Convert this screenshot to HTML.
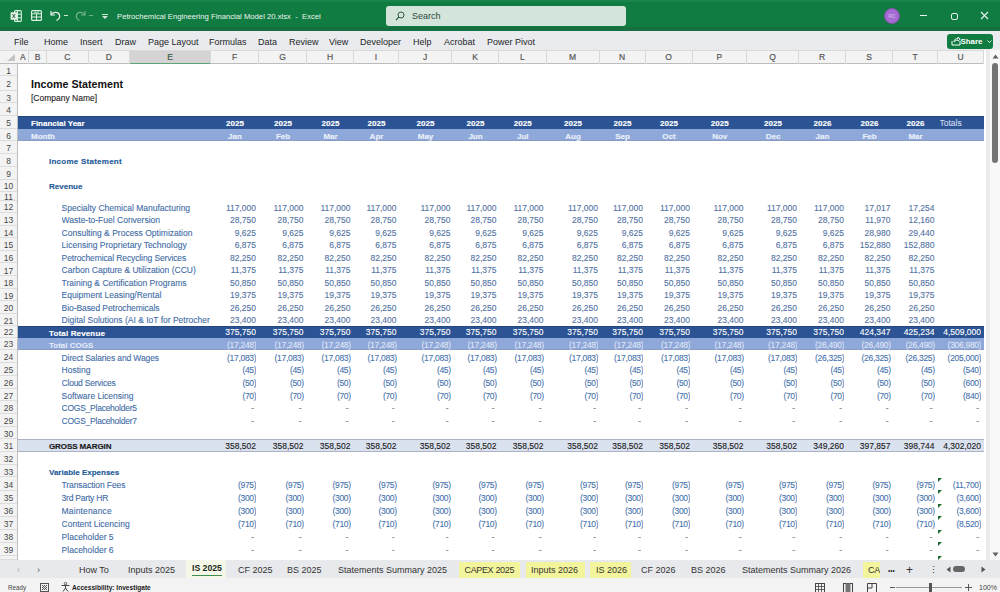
<!DOCTYPE html>
<html><head><meta charset="utf-8">
<style>
*{margin:0;padding:0;box-sizing:border-box;}
html,body{width:1000px;height:592px;overflow:hidden;background:#fff;font-family:"Liberation Sans",sans-serif;}
div{position:absolute;white-space:nowrap;}
#titlebar{left:0;top:0;width:1000px;height:31px;background:#107c41;}
#ribbon{left:0;top:31px;width:1000px;height:19px;background:#e9ebef;}
.menu{top:0;height:19px;line-height:22px;font-size:9px;color:#262626;}
#colhdr{left:0;top:50px;width:984px;height:13.5px;background:#f3f3f3;border-top:1px solid #dadada;border-bottom:1px solid #bdbdbd;}
.ch{top:0;height:12.5px;line-height:13.5px;text-align:center;font-size:8.5px;color:#555;-webkit-text-stroke:0.2px;border-right:1px solid #d8d8d8;}
.ch.sel{background:#d5d3d3;border-bottom:1.5px solid #5fa57a;color:#3d5a48;}
#rowhdr{left:0;top:63.5px;width:17.5px;height:496px;background:#f3f3f3;border-right:1px solid #bdbdbd;}
.rhd{left:0;width:17px;text-align:center;font-size:8.5px;color:#484848;border-bottom:1px solid #dcdcdc;overflow:hidden;}
#sheet{left:0;top:0;width:1000px;height:592px;}
.reg{font-size:8.5px;line-height:12px;overflow:hidden;-webkit-text-stroke:0.1px;}
.bold{font-size:8px;font-weight:bold;line-height:12px;-webkit-text-stroke:0.15px;}
.title{font-size:10.7px;font-weight:bold;color:#111;line-height:12px;}
.blk{color:#1a1a1a;}
.wht{color:#ffffff;}
.wht2{color:rgba(255,255,255,0.72);}
.wht3{color:#eaf0fa;}
.tot{color:#d3def2;}
.blu{color:#1f5c99;}
.itm{color:#416ca6;}
.num{color:#5272a3;}
.num.neg{color:#4673ae;}
.neg{letter-spacing:-0.3px;}
.dash{color:#8a8a8a;}
.tri{width:0;height:0;border-top:4px solid #1e6b30;border-right:4px solid transparent;}
#vscroll{left:984px;top:50px;width:16px;height:509.5px;background:linear-gradient(to right,#ffffff 0,#ffffff 2.5px,#ebebeb 2.5px,#ebebeb 6px,#f8f8f8 6px);}
#tabbar{left:0;top:559.5px;width:1000px;height:18.5px;background:#e8e9ec;}
.tab{top:0;height:18.5px;line-height:21px;font-size:9px;color:#333;}
.ytab{background:#f3f59c;top:2.5px;height:16px;line-height:17px;}
#status{left:0;top:578px;width:1000px;height:14px;background:#f3f3f3;}
.st{top:3px;height:14px;line-height:14px;font-size:6.5px;color:#444;}
</style></head><body>
<div id="titlebar">
  <div style="left:0;top:0;width:1000px;height:2px;background:#1a844f;"></div>
  <div style="left:0;top:27px;width:1000px;height:4px;background:#156f40;"></div>
  <div style="left:0;top:30.5px;width:1000px;height:1px;background:#9fd4b4;"></div>
  <!-- excel icon -->
  <svg style="position:absolute;left:10px;top:10px" width="12" height="12" viewBox="0 0 12 12">
    <rect x="4.5" y="0.6" width="6.8" height="10.8" rx="1" fill="none" stroke="#dff0e6" stroke-width="1.1"/>
    <path d="M7.5 0.6 V11.4 M4.5 4.2 H11.3 M4.5 7.8 H11.3" stroke="#dff0e6" stroke-width="1"/>
    <rect x="0.6" y="2.2" width="6.6" height="7.6" rx="0.6" fill="#e3f2e9"/>
    <path d="M2.4 4 L5.2 8 M5.2 4 L2.4 8" stroke="#2e6b48" stroke-width="1"/>
  </svg>
  <!-- save icon -->
  <svg style="position:absolute;left:31px;top:10px" width="11" height="11" viewBox="0 0 11 11">
    <rect x="0.6" y="0.6" width="9.8" height="9.8" rx="1" fill="none" stroke="#dff0e6" stroke-width="1.2"/>
    <path d="M0.6 3.8 H10.4 M0.6 7 H10.4 M5.5 3.8 V10.4" stroke="#dff0e6" stroke-width="1"/>
    <rect x="3" y="1.4" width="5" height="1.6" fill="#7fbf98"/>
  </svg>
  <!-- undo -->
  <svg style="position:absolute;left:49px;top:9px" width="14" height="13" viewBox="0 0 14 13">
    <path d="M2 2 L2 6 L6 6" fill="none" stroke="#e9f5ee" stroke-width="1.2"/>
    <path d="M2.3 5.8 C4 2.5 9.5 2.5 10.5 6 C11.2 8.5 9.5 10.5 7.5 11.5" fill="none" stroke="#e9f5ee" stroke-width="1.2"/>
  </svg>
  <div style="left:64px;top:15px;width:4px;height:1px;background:#cfe6d8;"></div>
  <!-- redo dim -->
  <svg style="position:absolute;left:74px;top:9px" width="14" height="13" viewBox="0 0 14 13" opacity="0.45">
    <path d="M11 2 L11 6 L7 6" fill="none" stroke="#e9f5ee" stroke-width="1.2"/>
    <path d="M10.7 5.8 C9 2.5 3.5 2.5 2.5 6 C1.8 8.5 3.5 10.5 5.5 11.5" fill="none" stroke="#e9f5ee" stroke-width="1.2"/>
  </svg>
  <div style="left:89px;top:15px;width:4px;height:1px;background:#6fae89;"></div>
  <div style="left:101.5px;top:13.5px;width:6px;height:1px;background:#cfe6d8;"></div>
  <svg style="position:absolute;left:101.5px;top:15.5px" width="6" height="3" viewBox="0 0 6 3"><path d="M0 0 H6 L3 3Z" fill="#cfe6d8"/></svg>
  <div style="left:117px;top:0;height:31px;line-height:34px;font-size:7.7px;color:#eaf4ee;">Petrochemical Engineering Financial Model 20.xlsx &nbsp;-&nbsp; Excel</div>
  <!-- search -->
  <div style="left:386px;top:6px;width:240px;height:20px;background:#d3e4da;border-radius:3px;"></div>
  <svg style="position:absolute;left:395px;top:11px" width="10" height="10" viewBox="0 0 10 10">
    <circle cx="6" cy="4" r="3" fill="none" stroke="#2f5b42" stroke-width="1"/>
    <line x1="3.8" y1="6.2" x2="1" y2="9" stroke="#2f5b42" stroke-width="1.1"/>
  </svg>
  <div style="left:412px;top:6px;height:20px;line-height:20px;font-size:9px;color:#2e4a3a;">Search</div>
  <!-- avatar -->
  <div style="left:884px;top:8px;width:16px;height:16px;border-radius:50%;background:#a56ad2;border:1.5px solid #7e52a8;"></div>
  <div style="left:884px;top:8px;width:16px;height:16px;line-height:16px;text-align:center;font-size:5px;color:#d9c2f0;">RC</div>
  <div style="left:920px;top:15px;width:7px;height:1px;background:#e9f5ee;"></div>
  <div style="left:951px;top:12.5px;width:7px;height:7px;border:1.2px solid #e9f5ee;border-radius:2px;"></div>
  <svg style="position:absolute;left:980px;top:11px" width="9" height="9" viewBox="0 0 9 9">
    <path d="M1 1 L8 8 M8 1 L1 8" stroke="#e9f5ee" stroke-width="1.1"/>
  </svg>
</div>
<div id="ribbon">
  <div class="menu" style="left:14px">File</div>
  <div class="menu" style="left:44px">Home</div>
  <div class="menu" style="left:80px">Insert</div>
  <div class="menu" style="left:115px">Draw</div>
  <div class="menu" style="left:148px">Page Layout</div>
  <div class="menu" style="left:209px">Formulas</div>
  <div class="menu" style="left:258px">Data</div>
  <div class="menu" style="left:289px">Review</div>
  <div class="menu" style="left:329px">View</div>
  <div class="menu" style="left:360px">Developer</div>
  <div class="menu" style="left:413px">Help</div>
  <div class="menu" style="left:444px">Acrobat</div>
  <div class="menu" style="left:487px">Power Pivot</div>
  <div style="left:947px;top:2.5px;width:46px;height:15px;background:#107c41;border-radius:3px;"></div>
  <svg style="position:absolute;left:951px;top:5px" width="10" height="10" viewBox="0 0 10 10">
    <path d="M1 5 L1 9 L9 9 L9 5" fill="none" stroke="#fff" stroke-width="1"/>
    <path d="M3 6 C3 3 5 2.5 7 2.5 L7 1 L9.2 3 L7 5 L7 4 C5.5 4 4.2 4.5 3 6" fill="none" stroke="#fff" stroke-width="0.9"/>
  </svg>
  <div style="left:960.5px;top:2.5px;height:15px;line-height:15px;font-size:7.9px;font-weight:bold;color:#fff;">Share</div>
  <svg style="position:absolute;left:986.5px;top:9px" width="5" height="3" viewBox="0 0 5 3"><path d="M0.5 0.5 L2.5 2.5 L4.5 0.5" fill="none" stroke="#fff" stroke-width="0.9"/></svg>
</div>
<div id="colhdr">
<div class="ch" style="left:17.5px;width:11.5px;">A</div>
<div class="ch" style="left:29px;width:18px;">B</div>
<div class="ch" style="left:47px;width:41.5px;">C</div>
<div class="ch" style="left:88.5px;width:41.5px;">D</div>
<div class="ch sel" style="left:130px;width:81px;">E</div>
<div class="ch" style="left:211px;width:48px;">F</div>
<div class="ch" style="left:259px;width:48px;">G</div>
<div class="ch" style="left:307px;width:47px;">H</div>
<div class="ch" style="left:354px;width:45px;">I</div>
<div class="ch" style="left:399px;width:53px;">J</div>
<div class="ch" style="left:452px;width:47px;">K</div>
<div class="ch" style="left:499px;width:47.5px;">L</div>
<div class="ch" style="left:546.5px;width:53.0px;">M</div>
<div class="ch" style="left:599.5px;width:46.0px;">N</div>
<div class="ch" style="left:645.5px;width:47.0px;">O</div>
<div class="ch" style="left:692.5px;width:54.5px;">P</div>
<div class="ch" style="left:747px;width:52px;">Q</div>
<div class="ch" style="left:799px;width:47px;">R</div>
<div class="ch" style="left:846px;width:47px;">S</div>
<div class="ch" style="left:893px;width:45px;">T</div>
<div class="ch" style="left:938px;width:46px;">U</div>
</div>
<svg style="position:absolute;left:5px;top:53px" width="11" height="9" viewBox="0 0 11 9"><path d="M10 1 L10 8 L2 8 Z" fill="#c4c4c4"/></svg>
<div id="rowhdr"></div>
<div class="rhd" style="top:63.5px;height:12.5px;line-height:14.0px;">1</div>
<div class="rhd" style="top:76px;height:14.5px;line-height:16.0px;">2</div>
<div class="rhd" style="top:90.5px;height:12.700000000000003px;line-height:14.200000000000003px;">3</div>
<div class="rhd" style="top:103.2px;height:13.0px;line-height:14.5px;">4</div>
<div class="rhd" style="top:116.2px;height:12.600000000000009px;line-height:14.100000000000009px;">5</div>
<div class="rhd" style="top:128.8px;height:12.599999999999994px;line-height:14.099999999999994px;">6</div>
<div class="rhd" style="top:141.4px;height:12.900000000000006px;line-height:14.400000000000006px;">7</div>
<div class="rhd" style="top:154.3px;height:12.799999999999983px;line-height:14.299999999999983px;">8</div>
<div class="rhd" style="top:167.1px;height:12.5px;line-height:14.0px;">9</div>
<div class="rhd" style="top:179.6px;height:12.400000000000006px;line-height:13.900000000000006px;">10</div>
<div class="rhd" style="top:192px;height:9px;line-height:10.5px;">11</div>
<div class="rhd" style="top:201px;height:12.400000000000006px;line-height:13.900000000000006px;">12</div>
<div class="rhd" style="top:213.4px;height:12.5px;line-height:14.0px;">13</div>
<div class="rhd" style="top:225.9px;height:12.5px;line-height:14.0px;">14</div>
<div class="rhd" style="top:238.4px;height:12.5px;line-height:14.0px;">15</div>
<div class="rhd" style="top:250.9px;height:12.599999999999994px;line-height:14.099999999999994px;">16</div>
<div class="rhd" style="top:263.5px;height:12.5px;line-height:14.0px;">17</div>
<div class="rhd" style="top:276px;height:12.5px;line-height:14.0px;">18</div>
<div class="rhd" style="top:288.5px;height:12.5px;line-height:14.0px;">19</div>
<div class="rhd" style="top:301px;height:12.600000000000023px;line-height:14.100000000000023px;">20</div>
<div class="rhd" style="top:313.6px;height:12.599999999999966px;line-height:14.099999999999966px;">21</div>
<div class="rhd" style="top:326.2px;height:12.0px;line-height:13.5px;">22</div>
<div class="rhd" style="top:338.2px;height:12.199999999999989px;line-height:13.699999999999989px;">23</div>
<div class="rhd" style="top:350.4px;height:12.900000000000034px;line-height:14.400000000000034px;">24</div>
<div class="rhd" style="top:363.3px;height:12.699999999999989px;line-height:14.199999999999989px;">25</div>
<div class="rhd" style="top:376px;height:12.699999999999989px;line-height:14.199999999999989px;">26</div>
<div class="rhd" style="top:388.7px;height:12.600000000000023px;line-height:14.100000000000023px;">27</div>
<div class="rhd" style="top:401.3px;height:12.699999999999989px;line-height:14.199999999999989px;">28</div>
<div class="rhd" style="top:414px;height:12.5px;line-height:14.0px;">29</div>
<div class="rhd" style="top:426.5px;height:12.5px;line-height:14.0px;">30</div>
<div class="rhd" style="top:439px;height:12.699999999999989px;line-height:14.199999999999989px;">31</div>
<div class="rhd" style="top:451.7px;height:12.900000000000034px;line-height:14.400000000000034px;">32</div>
<div class="rhd" style="top:464.6px;height:12.899999999999977px;line-height:14.399999999999977px;">33</div>
<div class="rhd" style="top:477.5px;height:13.0px;line-height:14.5px;">34</div>
<div class="rhd" style="top:490.5px;height:13.0px;line-height:14.5px;">35</div>
<div class="rhd" style="top:503.5px;height:13.0px;line-height:14.5px;">36</div>
<div class="rhd" style="top:516.5px;height:13.0px;line-height:14.5px;">37</div>
<div class="rhd" style="top:529.5px;height:13.0px;line-height:14.5px;">38</div>
<div class="rhd" style="top:542.5px;height:13.0px;line-height:14.5px;">39</div>
<div class="rhd" style="top:555.5px;height:4.0px;line-height:5.5px;"></div>
<div style="left:17.5px;top:116px;width:966.5px;height:13px;background:#2c5394;border-top:1px solid #24467e;box-sizing:border-box;"></div>
<div style="left:17.5px;top:129px;width:966.5px;height:12px;background:#8ea8da;border-bottom:1px solid #8a9cc2;box-sizing:border-box;"></div>
<div style="left:17.5px;top:326px;width:966.5px;height:12px;background:#2c5394;border-top:1px solid #24467e;box-sizing:border-box;"></div>
<div style="left:17.5px;top:338px;width:966.5px;height:12px;background:#8ea8da;border-bottom:1px solid #8a9cc2;box-sizing:border-box;"></div>
<div style="left:17.5px;top:439px;width:966.5px;height:13px;background:#dae1ef;border-top:1px solid #aab2c4;border-bottom:1px solid #aab2c4;box-sizing:border-box;"></div>
<div class="title" style="left:31px;top:78px;width:228px;height:12px;">Income Statement</div>
<div class="reg blk" style="left:31px;top:92px;width:228px;height:12px;">[Company Name]</div>
<div class="bold wht" style="left:31px;top:118px;width:180px;height:12px;">Financial Year</div>
<div class="bold wht3" style="left:31px;top:131px;width:180px;height:12px;">Month</div>
<div class="bold wht" style="left:211px;top:118px;width:48px;height:12px;text-align:center;">2025</div>
<div class="bold wht3" style="left:211px;top:131px;width:48px;height:12px;text-align:center;">Jan</div>
<div class="bold wht" style="left:259px;top:118px;width:48px;height:12px;text-align:center;">2025</div>
<div class="bold wht3" style="left:259px;top:131px;width:48px;height:12px;text-align:center;">Feb</div>
<div class="bold wht" style="left:307px;top:118px;width:47px;height:12px;text-align:center;">2025</div>
<div class="bold wht3" style="left:307px;top:131px;width:47px;height:12px;text-align:center;">Mar</div>
<div class="bold wht" style="left:354px;top:118px;width:45px;height:12px;text-align:center;">2025</div>
<div class="bold wht3" style="left:354px;top:131px;width:45px;height:12px;text-align:center;">Apr</div>
<div class="bold wht" style="left:399px;top:118px;width:53px;height:12px;text-align:center;">2025</div>
<div class="bold wht3" style="left:399px;top:131px;width:53px;height:12px;text-align:center;">May</div>
<div class="bold wht" style="left:452px;top:118px;width:47px;height:12px;text-align:center;">2025</div>
<div class="bold wht3" style="left:452px;top:131px;width:47px;height:12px;text-align:center;">Jun</div>
<div class="bold wht" style="left:499px;top:118px;width:47.5px;height:12px;text-align:center;">2025</div>
<div class="bold wht3" style="left:499px;top:131px;width:47.5px;height:12px;text-align:center;">Jul</div>
<div class="bold wht" style="left:546.5px;top:118px;width:53.0px;height:12px;text-align:center;">2025</div>
<div class="bold wht3" style="left:546.5px;top:131px;width:53.0px;height:12px;text-align:center;">Aug</div>
<div class="bold wht" style="left:599.5px;top:118px;width:46.0px;height:12px;text-align:center;">2025</div>
<div class="bold wht3" style="left:599.5px;top:131px;width:46.0px;height:12px;text-align:center;">Sep</div>
<div class="bold wht" style="left:645.5px;top:118px;width:47.0px;height:12px;text-align:center;">2025</div>
<div class="bold wht3" style="left:645.5px;top:131px;width:47.0px;height:12px;text-align:center;">Oct</div>
<div class="bold wht" style="left:692.5px;top:118px;width:54.5px;height:12px;text-align:center;">2025</div>
<div class="bold wht3" style="left:692.5px;top:131px;width:54.5px;height:12px;text-align:center;">Nov</div>
<div class="bold wht" style="left:747px;top:118px;width:52px;height:12px;text-align:center;">2025</div>
<div class="bold wht3" style="left:747px;top:131px;width:52px;height:12px;text-align:center;">Dec</div>
<div class="bold wht" style="left:799px;top:118px;width:47px;height:12px;text-align:center;">2026</div>
<div class="bold wht3" style="left:799px;top:131px;width:47px;height:12px;text-align:center;">Jan</div>
<div class="bold wht" style="left:846px;top:118px;width:47px;height:12px;text-align:center;">2026</div>
<div class="bold wht3" style="left:846px;top:131px;width:47px;height:12px;text-align:center;">Feb</div>
<div class="bold wht" style="left:893px;top:118px;width:45px;height:12px;text-align:center;">2026</div>
<div class="bold wht3" style="left:893px;top:131px;width:45px;height:12px;text-align:center;">Mar</div>
<div class="reg tot" style="left:939.5px;top:117px;width:44.5px;height:12px;">Totals</div>
<div class="bold blu" style="left:49px;top:156px;width:162px;height:12px;letter-spacing:0.25px;">Income Statement</div>
<div class="bold blu" style="left:49px;top:181px;width:162px;height:12px;">Revenue</div>
<div class="bold blu" style="left:49px;top:467px;width:162px;height:12px;">Variable Expenses</div>
<div class="reg itm" style="left:61.6px;top:202px;width:149.4px;height:12px;">Specialty Chemical Manufacturing</div>
<div class="reg num" style="left:211px;top:202px;width:45px;height:12px;text-align:right;">117,000</div>
<div class="reg num" style="left:259px;top:202px;width:44.5px;height:12px;text-align:right;">117,000</div>
<div class="reg num" style="left:307px;top:202px;width:43.5px;height:12px;text-align:right;">117,000</div>
<div class="reg num" style="left:354px;top:202px;width:42.5px;height:12px;text-align:right;">117,000</div>
<div class="reg num" style="left:399px;top:202px;width:51.5px;height:12px;text-align:right;">117,000</div>
<div class="reg num" style="left:452px;top:202px;width:44.5px;height:12px;text-align:right;">117,000</div>
<div class="reg num" style="left:499px;top:202px;width:44.5px;height:12px;text-align:right;">117,000</div>
<div class="reg num" style="left:546.5px;top:202px;width:51.5px;height:12px;text-align:right;">117,000</div>
<div class="reg num" style="left:599.5px;top:202px;width:43.5px;height:12px;text-align:right;">117,000</div>
<div class="reg num" style="left:645.5px;top:202px;width:44.5px;height:12px;text-align:right;">117,000</div>
<div class="reg num" style="left:692.5px;top:202px;width:51.0px;height:12px;text-align:right;">117,000</div>
<div class="reg num" style="left:747px;top:202px;width:50px;height:12px;text-align:right;">117,000</div>
<div class="reg num" style="left:799px;top:202px;width:45px;height:12px;text-align:right;">117,000</div>
<div class="reg num" style="left:846px;top:202px;width:44.5px;height:12px;text-align:right;">17,017</div>
<div class="reg num" style="left:893px;top:202px;width:41.5px;height:12px;text-align:right;">17,254</div>
<div class="reg itm" style="left:61.6px;top:214px;width:149.4px;height:12px;">Waste-to-Fuel Conversion</div>
<div class="reg num" style="left:211px;top:214px;width:45px;height:12px;text-align:right;">28,750</div>
<div class="reg num" style="left:259px;top:214px;width:44.5px;height:12px;text-align:right;">28,750</div>
<div class="reg num" style="left:307px;top:214px;width:43.5px;height:12px;text-align:right;">28,750</div>
<div class="reg num" style="left:354px;top:214px;width:42.5px;height:12px;text-align:right;">28,750</div>
<div class="reg num" style="left:399px;top:214px;width:51.5px;height:12px;text-align:right;">28,750</div>
<div class="reg num" style="left:452px;top:214px;width:44.5px;height:12px;text-align:right;">28,750</div>
<div class="reg num" style="left:499px;top:214px;width:44.5px;height:12px;text-align:right;">28,750</div>
<div class="reg num" style="left:546.5px;top:214px;width:51.5px;height:12px;text-align:right;">28,750</div>
<div class="reg num" style="left:599.5px;top:214px;width:43.5px;height:12px;text-align:right;">28,750</div>
<div class="reg num" style="left:645.5px;top:214px;width:44.5px;height:12px;text-align:right;">28,750</div>
<div class="reg num" style="left:692.5px;top:214px;width:51.0px;height:12px;text-align:right;">28,750</div>
<div class="reg num" style="left:747px;top:214px;width:50px;height:12px;text-align:right;">28,750</div>
<div class="reg num" style="left:799px;top:214px;width:45px;height:12px;text-align:right;">28,750</div>
<div class="reg num" style="left:846px;top:214px;width:44.5px;height:12px;text-align:right;">11,970</div>
<div class="reg num" style="left:893px;top:214px;width:41.5px;height:12px;text-align:right;">12,160</div>
<div class="reg itm" style="left:61.6px;top:227px;width:149.4px;height:12px;">Consulting &amp; Process Optimization</div>
<div class="reg num" style="left:211px;top:227px;width:45px;height:12px;text-align:right;">9,625</div>
<div class="reg num" style="left:259px;top:227px;width:44.5px;height:12px;text-align:right;">9,625</div>
<div class="reg num" style="left:307px;top:227px;width:43.5px;height:12px;text-align:right;">9,625</div>
<div class="reg num" style="left:354px;top:227px;width:42.5px;height:12px;text-align:right;">9,625</div>
<div class="reg num" style="left:399px;top:227px;width:51.5px;height:12px;text-align:right;">9,625</div>
<div class="reg num" style="left:452px;top:227px;width:44.5px;height:12px;text-align:right;">9,625</div>
<div class="reg num" style="left:499px;top:227px;width:44.5px;height:12px;text-align:right;">9,625</div>
<div class="reg num" style="left:546.5px;top:227px;width:51.5px;height:12px;text-align:right;">9,625</div>
<div class="reg num" style="left:599.5px;top:227px;width:43.5px;height:12px;text-align:right;">9,625</div>
<div class="reg num" style="left:645.5px;top:227px;width:44.5px;height:12px;text-align:right;">9,625</div>
<div class="reg num" style="left:692.5px;top:227px;width:51.0px;height:12px;text-align:right;">9,625</div>
<div class="reg num" style="left:747px;top:227px;width:50px;height:12px;text-align:right;">9,625</div>
<div class="reg num" style="left:799px;top:227px;width:45px;height:12px;text-align:right;">9,625</div>
<div class="reg num" style="left:846px;top:227px;width:44.5px;height:12px;text-align:right;">28,980</div>
<div class="reg num" style="left:893px;top:227px;width:41.5px;height:12px;text-align:right;">29,440</div>
<div class="reg itm" style="left:61.6px;top:239px;width:149.4px;height:12px;">Licensing Proprietary Technology</div>
<div class="reg num" style="left:211px;top:239px;width:45px;height:12px;text-align:right;">6,875</div>
<div class="reg num" style="left:259px;top:239px;width:44.5px;height:12px;text-align:right;">6,875</div>
<div class="reg num" style="left:307px;top:239px;width:43.5px;height:12px;text-align:right;">6,875</div>
<div class="reg num" style="left:354px;top:239px;width:42.5px;height:12px;text-align:right;">6,875</div>
<div class="reg num" style="left:399px;top:239px;width:51.5px;height:12px;text-align:right;">6,875</div>
<div class="reg num" style="left:452px;top:239px;width:44.5px;height:12px;text-align:right;">6,875</div>
<div class="reg num" style="left:499px;top:239px;width:44.5px;height:12px;text-align:right;">6,875</div>
<div class="reg num" style="left:546.5px;top:239px;width:51.5px;height:12px;text-align:right;">6,875</div>
<div class="reg num" style="left:599.5px;top:239px;width:43.5px;height:12px;text-align:right;">6,875</div>
<div class="reg num" style="left:645.5px;top:239px;width:44.5px;height:12px;text-align:right;">6,875</div>
<div class="reg num" style="left:692.5px;top:239px;width:51.0px;height:12px;text-align:right;">6,875</div>
<div class="reg num" style="left:747px;top:239px;width:50px;height:12px;text-align:right;">6,875</div>
<div class="reg num" style="left:799px;top:239px;width:45px;height:12px;text-align:right;">6,875</div>
<div class="reg num" style="left:846px;top:239px;width:44.5px;height:12px;text-align:right;">152,880</div>
<div class="reg num" style="left:893px;top:239px;width:41.5px;height:12px;text-align:right;">152,880</div>
<div class="reg itm" style="left:61.6px;top:252px;width:149.4px;height:12px;letter-spacing:-0.11px;">Petrochemical Recycling Services</div>
<div class="reg num" style="left:211px;top:252px;width:45px;height:12px;text-align:right;">82,250</div>
<div class="reg num" style="left:259px;top:252px;width:44.5px;height:12px;text-align:right;">82,250</div>
<div class="reg num" style="left:307px;top:252px;width:43.5px;height:12px;text-align:right;">82,250</div>
<div class="reg num" style="left:354px;top:252px;width:42.5px;height:12px;text-align:right;">82,250</div>
<div class="reg num" style="left:399px;top:252px;width:51.5px;height:12px;text-align:right;">82,250</div>
<div class="reg num" style="left:452px;top:252px;width:44.5px;height:12px;text-align:right;">82,250</div>
<div class="reg num" style="left:499px;top:252px;width:44.5px;height:12px;text-align:right;">82,250</div>
<div class="reg num" style="left:546.5px;top:252px;width:51.5px;height:12px;text-align:right;">82,250</div>
<div class="reg num" style="left:599.5px;top:252px;width:43.5px;height:12px;text-align:right;">82,250</div>
<div class="reg num" style="left:645.5px;top:252px;width:44.5px;height:12px;text-align:right;">82,250</div>
<div class="reg num" style="left:692.5px;top:252px;width:51.0px;height:12px;text-align:right;">82,250</div>
<div class="reg num" style="left:747px;top:252px;width:50px;height:12px;text-align:right;">82,250</div>
<div class="reg num" style="left:799px;top:252px;width:45px;height:12px;text-align:right;">82,250</div>
<div class="reg num" style="left:846px;top:252px;width:44.5px;height:12px;text-align:right;">82,250</div>
<div class="reg num" style="left:893px;top:252px;width:41.5px;height:12px;text-align:right;">82,250</div>
<div class="reg itm" style="left:61.6px;top:264px;width:149.4px;height:12px;">Carbon Capture &amp; Utilization (CCU)</div>
<div class="reg num" style="left:211px;top:264px;width:45px;height:12px;text-align:right;">11,375</div>
<div class="reg num" style="left:259px;top:264px;width:44.5px;height:12px;text-align:right;">11,375</div>
<div class="reg num" style="left:307px;top:264px;width:43.5px;height:12px;text-align:right;">11,375</div>
<div class="reg num" style="left:354px;top:264px;width:42.5px;height:12px;text-align:right;">11,375</div>
<div class="reg num" style="left:399px;top:264px;width:51.5px;height:12px;text-align:right;">11,375</div>
<div class="reg num" style="left:452px;top:264px;width:44.5px;height:12px;text-align:right;">11,375</div>
<div class="reg num" style="left:499px;top:264px;width:44.5px;height:12px;text-align:right;">11,375</div>
<div class="reg num" style="left:546.5px;top:264px;width:51.5px;height:12px;text-align:right;">11,375</div>
<div class="reg num" style="left:599.5px;top:264px;width:43.5px;height:12px;text-align:right;">11,375</div>
<div class="reg num" style="left:645.5px;top:264px;width:44.5px;height:12px;text-align:right;">11,375</div>
<div class="reg num" style="left:692.5px;top:264px;width:51.0px;height:12px;text-align:right;">11,375</div>
<div class="reg num" style="left:747px;top:264px;width:50px;height:12px;text-align:right;">11,375</div>
<div class="reg num" style="left:799px;top:264px;width:45px;height:12px;text-align:right;">11,375</div>
<div class="reg num" style="left:846px;top:264px;width:44.5px;height:12px;text-align:right;">11,375</div>
<div class="reg num" style="left:893px;top:264px;width:41.5px;height:12px;text-align:right;">11,375</div>
<div class="reg itm" style="left:61.6px;top:277px;width:149.4px;height:12px;">Training &amp; Certification Programs</div>
<div class="reg num" style="left:211px;top:277px;width:45px;height:12px;text-align:right;">50,850</div>
<div class="reg num" style="left:259px;top:277px;width:44.5px;height:12px;text-align:right;">50,850</div>
<div class="reg num" style="left:307px;top:277px;width:43.5px;height:12px;text-align:right;">50,850</div>
<div class="reg num" style="left:354px;top:277px;width:42.5px;height:12px;text-align:right;">50,850</div>
<div class="reg num" style="left:399px;top:277px;width:51.5px;height:12px;text-align:right;">50,850</div>
<div class="reg num" style="left:452px;top:277px;width:44.5px;height:12px;text-align:right;">50,850</div>
<div class="reg num" style="left:499px;top:277px;width:44.5px;height:12px;text-align:right;">50,850</div>
<div class="reg num" style="left:546.5px;top:277px;width:51.5px;height:12px;text-align:right;">50,850</div>
<div class="reg num" style="left:599.5px;top:277px;width:43.5px;height:12px;text-align:right;">50,850</div>
<div class="reg num" style="left:645.5px;top:277px;width:44.5px;height:12px;text-align:right;">50,850</div>
<div class="reg num" style="left:692.5px;top:277px;width:51.0px;height:12px;text-align:right;">50,850</div>
<div class="reg num" style="left:747px;top:277px;width:50px;height:12px;text-align:right;">50,850</div>
<div class="reg num" style="left:799px;top:277px;width:45px;height:12px;text-align:right;">50,850</div>
<div class="reg num" style="left:846px;top:277px;width:44.5px;height:12px;text-align:right;">50,850</div>
<div class="reg num" style="left:893px;top:277px;width:41.5px;height:12px;text-align:right;">50,850</div>
<div class="reg itm" style="left:61.6px;top:289px;width:149.4px;height:12px;">Equipment Leasing/Rental</div>
<div class="reg num" style="left:211px;top:289px;width:45px;height:12px;text-align:right;">19,375</div>
<div class="reg num" style="left:259px;top:289px;width:44.5px;height:12px;text-align:right;">19,375</div>
<div class="reg num" style="left:307px;top:289px;width:43.5px;height:12px;text-align:right;">19,375</div>
<div class="reg num" style="left:354px;top:289px;width:42.5px;height:12px;text-align:right;">19,375</div>
<div class="reg num" style="left:399px;top:289px;width:51.5px;height:12px;text-align:right;">19,375</div>
<div class="reg num" style="left:452px;top:289px;width:44.5px;height:12px;text-align:right;">19,375</div>
<div class="reg num" style="left:499px;top:289px;width:44.5px;height:12px;text-align:right;">19,375</div>
<div class="reg num" style="left:546.5px;top:289px;width:51.5px;height:12px;text-align:right;">19,375</div>
<div class="reg num" style="left:599.5px;top:289px;width:43.5px;height:12px;text-align:right;">19,375</div>
<div class="reg num" style="left:645.5px;top:289px;width:44.5px;height:12px;text-align:right;">19,375</div>
<div class="reg num" style="left:692.5px;top:289px;width:51.0px;height:12px;text-align:right;">19,375</div>
<div class="reg num" style="left:747px;top:289px;width:50px;height:12px;text-align:right;">19,375</div>
<div class="reg num" style="left:799px;top:289px;width:45px;height:12px;text-align:right;">19,375</div>
<div class="reg num" style="left:846px;top:289px;width:44.5px;height:12px;text-align:right;">19,375</div>
<div class="reg num" style="left:893px;top:289px;width:41.5px;height:12px;text-align:right;">19,375</div>
<div class="reg itm" style="left:61.6px;top:302px;width:149.4px;height:12px;letter-spacing:-0.08px;">Bio-Based Petrochemicals</div>
<div class="reg num" style="left:211px;top:302px;width:45px;height:12px;text-align:right;">26,250</div>
<div class="reg num" style="left:259px;top:302px;width:44.5px;height:12px;text-align:right;">26,250</div>
<div class="reg num" style="left:307px;top:302px;width:43.5px;height:12px;text-align:right;">26,250</div>
<div class="reg num" style="left:354px;top:302px;width:42.5px;height:12px;text-align:right;">26,250</div>
<div class="reg num" style="left:399px;top:302px;width:51.5px;height:12px;text-align:right;">26,250</div>
<div class="reg num" style="left:452px;top:302px;width:44.5px;height:12px;text-align:right;">26,250</div>
<div class="reg num" style="left:499px;top:302px;width:44.5px;height:12px;text-align:right;">26,250</div>
<div class="reg num" style="left:546.5px;top:302px;width:51.5px;height:12px;text-align:right;">26,250</div>
<div class="reg num" style="left:599.5px;top:302px;width:43.5px;height:12px;text-align:right;">26,250</div>
<div class="reg num" style="left:645.5px;top:302px;width:44.5px;height:12px;text-align:right;">26,250</div>
<div class="reg num" style="left:692.5px;top:302px;width:51.0px;height:12px;text-align:right;">26,250</div>
<div class="reg num" style="left:747px;top:302px;width:50px;height:12px;text-align:right;">26,250</div>
<div class="reg num" style="left:799px;top:302px;width:45px;height:12px;text-align:right;">26,250</div>
<div class="reg num" style="left:846px;top:302px;width:44.5px;height:12px;text-align:right;">26,250</div>
<div class="reg num" style="left:893px;top:302px;width:41.5px;height:12px;text-align:right;">26,250</div>
<div class="reg itm" style="left:61.6px;top:314px;width:149.4px;height:12px;">Digital Solutions (AI &amp; IoT for Petrocher</div>
<div class="reg num" style="left:211px;top:314px;width:45px;height:12px;text-align:right;">23,400</div>
<div class="reg num" style="left:259px;top:314px;width:44.5px;height:12px;text-align:right;">23,400</div>
<div class="reg num" style="left:307px;top:314px;width:43.5px;height:12px;text-align:right;">23,400</div>
<div class="reg num" style="left:354px;top:314px;width:42.5px;height:12px;text-align:right;">23,400</div>
<div class="reg num" style="left:399px;top:314px;width:51.5px;height:12px;text-align:right;">23,400</div>
<div class="reg num" style="left:452px;top:314px;width:44.5px;height:12px;text-align:right;">23,400</div>
<div class="reg num" style="left:499px;top:314px;width:44.5px;height:12px;text-align:right;">23,400</div>
<div class="reg num" style="left:546.5px;top:314px;width:51.5px;height:12px;text-align:right;">23,400</div>
<div class="reg num" style="left:599.5px;top:314px;width:43.5px;height:12px;text-align:right;">23,400</div>
<div class="reg num" style="left:645.5px;top:314px;width:44.5px;height:12px;text-align:right;">23,400</div>
<div class="reg num" style="left:692.5px;top:314px;width:51.0px;height:12px;text-align:right;">23,400</div>
<div class="reg num" style="left:747px;top:314px;width:50px;height:12px;text-align:right;">23,400</div>
<div class="reg num" style="left:799px;top:314px;width:45px;height:12px;text-align:right;">23,400</div>
<div class="reg num" style="left:846px;top:314px;width:44.5px;height:12px;text-align:right;">23,400</div>
<div class="reg num" style="left:893px;top:314px;width:41.5px;height:12px;text-align:right;">23,400</div>
<div class="bold wht" style="left:49px;top:328px;width:162px;height:12px;letter-spacing:0.15px;">Total Revenue</div>
<div class="reg wht" style="left:211px;top:326px;width:45px;height:12px;text-align:right;">375,750</div>
<div class="reg wht" style="left:259px;top:326px;width:44.5px;height:12px;text-align:right;">375,750</div>
<div class="reg wht" style="left:307px;top:326px;width:43.5px;height:12px;text-align:right;">375,750</div>
<div class="reg wht" style="left:354px;top:326px;width:42.5px;height:12px;text-align:right;">375,750</div>
<div class="reg wht" style="left:399px;top:326px;width:51.5px;height:12px;text-align:right;">375,750</div>
<div class="reg wht" style="left:452px;top:326px;width:44.5px;height:12px;text-align:right;">375,750</div>
<div class="reg wht" style="left:499px;top:326px;width:44.5px;height:12px;text-align:right;">375,750</div>
<div class="reg wht" style="left:546.5px;top:326px;width:51.5px;height:12px;text-align:right;">375,750</div>
<div class="reg wht" style="left:599.5px;top:326px;width:43.5px;height:12px;text-align:right;">375,750</div>
<div class="reg wht" style="left:645.5px;top:326px;width:44.5px;height:12px;text-align:right;">375,750</div>
<div class="reg wht" style="left:692.5px;top:326px;width:51.0px;height:12px;text-align:right;">375,750</div>
<div class="reg wht" style="left:747px;top:326px;width:50px;height:12px;text-align:right;">375,750</div>
<div class="reg wht" style="left:799px;top:326px;width:45px;height:12px;text-align:right;">375,750</div>
<div class="reg wht" style="left:846px;top:326px;width:44.5px;height:12px;text-align:right;">424,347</div>
<div class="reg wht" style="left:893px;top:326px;width:41.5px;height:12px;text-align:right;">425,234</div>
<div class="reg wht" style="left:938px;top:326px;width:43px;height:12px;text-align:right;">4,509,000</div>
<div class="bold wht2" style="left:49px;top:340px;width:162px;height:12px;">Total COGS</div>
<div class="reg wht2 neg" style="left:211px;top:339px;width:45.30000000000001px;height:12px;text-align:right;">(17,248)</div>
<div class="reg wht2 neg" style="left:259px;top:339px;width:44.80000000000001px;height:12px;text-align:right;">(17,248)</div>
<div class="reg wht2 neg" style="left:307px;top:339px;width:43.80000000000001px;height:12px;text-align:right;">(17,248)</div>
<div class="reg wht2 neg" style="left:354px;top:339px;width:42.80000000000001px;height:12px;text-align:right;">(17,248)</div>
<div class="reg wht2 neg" style="left:399px;top:339px;width:51.80000000000001px;height:12px;text-align:right;">(17,248)</div>
<div class="reg wht2 neg" style="left:452px;top:339px;width:44.80000000000001px;height:12px;text-align:right;">(17,248)</div>
<div class="reg wht2 neg" style="left:499px;top:339px;width:44.799999999999955px;height:12px;text-align:right;">(17,248)</div>
<div class="reg wht2 neg" style="left:546.5px;top:339px;width:51.799999999999955px;height:12px;text-align:right;">(17,248)</div>
<div class="reg wht2 neg" style="left:599.5px;top:339px;width:43.799999999999955px;height:12px;text-align:right;">(17,248)</div>
<div class="reg wht2 neg" style="left:645.5px;top:339px;width:44.799999999999955px;height:12px;text-align:right;">(17,248)</div>
<div class="reg wht2 neg" style="left:692.5px;top:339px;width:51.299999999999955px;height:12px;text-align:right;">(17,248)</div>
<div class="reg wht2 neg" style="left:747px;top:339px;width:50.299999999999955px;height:12px;text-align:right;">(17,248)</div>
<div class="reg wht2 neg" style="left:799px;top:339px;width:45.299999999999955px;height:12px;text-align:right;">(26,490)</div>
<div class="reg wht2 neg" style="left:846px;top:339px;width:44.799999999999955px;height:12px;text-align:right;">(26,490)</div>
<div class="reg wht2 neg" style="left:893px;top:339px;width:41.799999999999955px;height:12px;text-align:right;">(26,490)</div>
<div class="reg wht2 neg" style="left:938px;top:339px;width:43.299999999999955px;height:12px;text-align:right;">(306,980)</div>
<div class="reg itm" style="left:61.6px;top:352px;width:149.4px;height:12px;letter-spacing:-0.12px;">Direct Salaries and Wages</div>
<div class="reg num neg" style="left:211px;top:352px;width:45.30000000000001px;height:12px;text-align:right;">(17,083)</div>
<div class="reg num neg" style="left:259px;top:352px;width:44.80000000000001px;height:12px;text-align:right;">(17,083)</div>
<div class="reg num neg" style="left:307px;top:352px;width:43.80000000000001px;height:12px;text-align:right;">(17,083)</div>
<div class="reg num neg" style="left:354px;top:352px;width:42.80000000000001px;height:12px;text-align:right;">(17,083)</div>
<div class="reg num neg" style="left:399px;top:352px;width:51.80000000000001px;height:12px;text-align:right;">(17,083)</div>
<div class="reg num neg" style="left:452px;top:352px;width:44.80000000000001px;height:12px;text-align:right;">(17,083)</div>
<div class="reg num neg" style="left:499px;top:352px;width:44.799999999999955px;height:12px;text-align:right;">(17,083)</div>
<div class="reg num neg" style="left:546.5px;top:352px;width:51.799999999999955px;height:12px;text-align:right;">(17,083)</div>
<div class="reg num neg" style="left:599.5px;top:352px;width:43.799999999999955px;height:12px;text-align:right;">(17,083)</div>
<div class="reg num neg" style="left:645.5px;top:352px;width:44.799999999999955px;height:12px;text-align:right;">(17,083)</div>
<div class="reg num neg" style="left:692.5px;top:352px;width:51.299999999999955px;height:12px;text-align:right;">(17,083)</div>
<div class="reg num neg" style="left:747px;top:352px;width:50.299999999999955px;height:12px;text-align:right;">(17,083)</div>
<div class="reg num neg" style="left:799px;top:352px;width:45.299999999999955px;height:12px;text-align:right;">(26,325)</div>
<div class="reg num neg" style="left:846px;top:352px;width:44.799999999999955px;height:12px;text-align:right;">(26,325)</div>
<div class="reg num neg" style="left:893px;top:352px;width:41.799999999999955px;height:12px;text-align:right;">(26,325)</div>
<div class="reg num neg" style="left:938px;top:352px;width:43.299999999999955px;height:12px;text-align:right;">(205,000)</div>
<div class="reg itm" style="left:61.6px;top:364px;width:149.4px;height:12px;">Hosting</div>
<div class="reg num neg" style="left:211px;top:364px;width:45.30000000000001px;height:12px;text-align:right;">(45)</div>
<div class="reg num neg" style="left:259px;top:364px;width:44.80000000000001px;height:12px;text-align:right;">(45)</div>
<div class="reg num neg" style="left:307px;top:364px;width:43.80000000000001px;height:12px;text-align:right;">(45)</div>
<div class="reg num neg" style="left:354px;top:364px;width:42.80000000000001px;height:12px;text-align:right;">(45)</div>
<div class="reg num neg" style="left:399px;top:364px;width:51.80000000000001px;height:12px;text-align:right;">(45)</div>
<div class="reg num neg" style="left:452px;top:364px;width:44.80000000000001px;height:12px;text-align:right;">(45)</div>
<div class="reg num neg" style="left:499px;top:364px;width:44.799999999999955px;height:12px;text-align:right;">(45)</div>
<div class="reg num neg" style="left:546.5px;top:364px;width:51.799999999999955px;height:12px;text-align:right;">(45)</div>
<div class="reg num neg" style="left:599.5px;top:364px;width:43.799999999999955px;height:12px;text-align:right;">(45)</div>
<div class="reg num neg" style="left:645.5px;top:364px;width:44.799999999999955px;height:12px;text-align:right;">(45)</div>
<div class="reg num neg" style="left:692.5px;top:364px;width:51.299999999999955px;height:12px;text-align:right;">(45)</div>
<div class="reg num neg" style="left:747px;top:364px;width:50.299999999999955px;height:12px;text-align:right;">(45)</div>
<div class="reg num neg" style="left:799px;top:364px;width:45.299999999999955px;height:12px;text-align:right;">(45)</div>
<div class="reg num neg" style="left:846px;top:364px;width:44.799999999999955px;height:12px;text-align:right;">(45)</div>
<div class="reg num neg" style="left:893px;top:364px;width:41.799999999999955px;height:12px;text-align:right;">(45)</div>
<div class="reg num neg" style="left:938px;top:364px;width:43.299999999999955px;height:12px;text-align:right;">(540)</div>
<div class="reg itm" style="left:61.6px;top:377px;width:149.4px;height:12px;letter-spacing:-0.24px;">Cloud Services</div>
<div class="reg num neg" style="left:211px;top:377px;width:45.30000000000001px;height:12px;text-align:right;">(50)</div>
<div class="reg num neg" style="left:259px;top:377px;width:44.80000000000001px;height:12px;text-align:right;">(50)</div>
<div class="reg num neg" style="left:307px;top:377px;width:43.80000000000001px;height:12px;text-align:right;">(50)</div>
<div class="reg num neg" style="left:354px;top:377px;width:42.80000000000001px;height:12px;text-align:right;">(50)</div>
<div class="reg num neg" style="left:399px;top:377px;width:51.80000000000001px;height:12px;text-align:right;">(50)</div>
<div class="reg num neg" style="left:452px;top:377px;width:44.80000000000001px;height:12px;text-align:right;">(50)</div>
<div class="reg num neg" style="left:499px;top:377px;width:44.799999999999955px;height:12px;text-align:right;">(50)</div>
<div class="reg num neg" style="left:546.5px;top:377px;width:51.799999999999955px;height:12px;text-align:right;">(50)</div>
<div class="reg num neg" style="left:599.5px;top:377px;width:43.799999999999955px;height:12px;text-align:right;">(50)</div>
<div class="reg num neg" style="left:645.5px;top:377px;width:44.799999999999955px;height:12px;text-align:right;">(50)</div>
<div class="reg num neg" style="left:692.5px;top:377px;width:51.299999999999955px;height:12px;text-align:right;">(50)</div>
<div class="reg num neg" style="left:747px;top:377px;width:50.299999999999955px;height:12px;text-align:right;">(50)</div>
<div class="reg num neg" style="left:799px;top:377px;width:45.299999999999955px;height:12px;text-align:right;">(50)</div>
<div class="reg num neg" style="left:846px;top:377px;width:44.799999999999955px;height:12px;text-align:right;">(50)</div>
<div class="reg num neg" style="left:893px;top:377px;width:41.799999999999955px;height:12px;text-align:right;">(50)</div>
<div class="reg num neg" style="left:938px;top:377px;width:43.299999999999955px;height:12px;text-align:right;">(600)</div>
<div class="reg itm" style="left:61.6px;top:390px;width:149.4px;height:12px;">Software Licensing</div>
<div class="reg num neg" style="left:211px;top:390px;width:45.30000000000001px;height:12px;text-align:right;">(70)</div>
<div class="reg num neg" style="left:259px;top:390px;width:44.80000000000001px;height:12px;text-align:right;">(70)</div>
<div class="reg num neg" style="left:307px;top:390px;width:43.80000000000001px;height:12px;text-align:right;">(70)</div>
<div class="reg num neg" style="left:354px;top:390px;width:42.80000000000001px;height:12px;text-align:right;">(70)</div>
<div class="reg num neg" style="left:399px;top:390px;width:51.80000000000001px;height:12px;text-align:right;">(70)</div>
<div class="reg num neg" style="left:452px;top:390px;width:44.80000000000001px;height:12px;text-align:right;">(70)</div>
<div class="reg num neg" style="left:499px;top:390px;width:44.799999999999955px;height:12px;text-align:right;">(70)</div>
<div class="reg num neg" style="left:546.5px;top:390px;width:51.799999999999955px;height:12px;text-align:right;">(70)</div>
<div class="reg num neg" style="left:599.5px;top:390px;width:43.799999999999955px;height:12px;text-align:right;">(70)</div>
<div class="reg num neg" style="left:645.5px;top:390px;width:44.799999999999955px;height:12px;text-align:right;">(70)</div>
<div class="reg num neg" style="left:692.5px;top:390px;width:51.299999999999955px;height:12px;text-align:right;">(70)</div>
<div class="reg num neg" style="left:747px;top:390px;width:50.299999999999955px;height:12px;text-align:right;">(70)</div>
<div class="reg num neg" style="left:799px;top:390px;width:45.299999999999955px;height:12px;text-align:right;">(70)</div>
<div class="reg num neg" style="left:846px;top:390px;width:44.799999999999955px;height:12px;text-align:right;">(70)</div>
<div class="reg num neg" style="left:893px;top:390px;width:41.799999999999955px;height:12px;text-align:right;">(70)</div>
<div class="reg num neg" style="left:938px;top:390px;width:43.299999999999955px;height:12px;text-align:right;">(840)</div>
<div class="reg itm" style="left:61.6px;top:402px;width:149.4px;height:12px;letter-spacing:-0.25px;">COGS_Placeholder5</div>
<div class="reg num dash" style="left:211px;top:402px;width:43px;height:12px;text-align:right;">-</div>
<div class="reg num dash" style="left:259px;top:402px;width:42.5px;height:12px;text-align:right;">-</div>
<div class="reg num dash" style="left:307px;top:402px;width:41.5px;height:12px;text-align:right;">-</div>
<div class="reg num dash" style="left:354px;top:402px;width:40.5px;height:12px;text-align:right;">-</div>
<div class="reg num dash" style="left:399px;top:402px;width:49.5px;height:12px;text-align:right;">-</div>
<div class="reg num dash" style="left:452px;top:402px;width:42.5px;height:12px;text-align:right;">-</div>
<div class="reg num dash" style="left:499px;top:402px;width:42.5px;height:12px;text-align:right;">-</div>
<div class="reg num dash" style="left:546.5px;top:402px;width:49.5px;height:12px;text-align:right;">-</div>
<div class="reg num dash" style="left:599.5px;top:402px;width:41.5px;height:12px;text-align:right;">-</div>
<div class="reg num dash" style="left:645.5px;top:402px;width:42.5px;height:12px;text-align:right;">-</div>
<div class="reg num dash" style="left:692.5px;top:402px;width:49.0px;height:12px;text-align:right;">-</div>
<div class="reg num dash" style="left:747px;top:402px;width:48px;height:12px;text-align:right;">-</div>
<div class="reg num dash" style="left:799px;top:402px;width:43px;height:12px;text-align:right;">-</div>
<div class="reg num dash" style="left:846px;top:402px;width:42.5px;height:12px;text-align:right;">-</div>
<div class="reg num dash" style="left:893px;top:402px;width:39.5px;height:12px;text-align:right;">-</div>
<div class="reg num dash" style="left:938px;top:402px;width:41px;height:12px;text-align:right;">-</div>
<div class="reg itm" style="left:61.6px;top:415px;width:149.4px;height:12px;letter-spacing:-0.25px;">COGS_Placeholder7</div>
<div class="reg num dash" style="left:211px;top:415px;width:43px;height:12px;text-align:right;">-</div>
<div class="reg num dash" style="left:259px;top:415px;width:42.5px;height:12px;text-align:right;">-</div>
<div class="reg num dash" style="left:307px;top:415px;width:41.5px;height:12px;text-align:right;">-</div>
<div class="reg num dash" style="left:354px;top:415px;width:40.5px;height:12px;text-align:right;">-</div>
<div class="reg num dash" style="left:399px;top:415px;width:49.5px;height:12px;text-align:right;">-</div>
<div class="reg num dash" style="left:452px;top:415px;width:42.5px;height:12px;text-align:right;">-</div>
<div class="reg num dash" style="left:499px;top:415px;width:42.5px;height:12px;text-align:right;">-</div>
<div class="reg num dash" style="left:546.5px;top:415px;width:49.5px;height:12px;text-align:right;">-</div>
<div class="reg num dash" style="left:599.5px;top:415px;width:41.5px;height:12px;text-align:right;">-</div>
<div class="reg num dash" style="left:645.5px;top:415px;width:42.5px;height:12px;text-align:right;">-</div>
<div class="reg num dash" style="left:692.5px;top:415px;width:49.0px;height:12px;text-align:right;">-</div>
<div class="reg num dash" style="left:747px;top:415px;width:48px;height:12px;text-align:right;">-</div>
<div class="reg num dash" style="left:799px;top:415px;width:43px;height:12px;text-align:right;">-</div>
<div class="reg num dash" style="left:846px;top:415px;width:42.5px;height:12px;text-align:right;">-</div>
<div class="reg num dash" style="left:893px;top:415px;width:39.5px;height:12px;text-align:right;">-</div>
<div class="reg num dash" style="left:938px;top:415px;width:41px;height:12px;text-align:right;">-</div>
<div class="bold blk" style="left:49px;top:441px;width:162px;height:12px;letter-spacing:-0.1px;">GROSS MARGIN</div>
<div class="reg blk" style="left:211px;top:440px;width:45px;height:12px;text-align:right;">358,502</div>
<div class="reg blk" style="left:259px;top:440px;width:44.5px;height:12px;text-align:right;">358,502</div>
<div class="reg blk" style="left:307px;top:440px;width:43.5px;height:12px;text-align:right;">358,502</div>
<div class="reg blk" style="left:354px;top:440px;width:42.5px;height:12px;text-align:right;">358,502</div>
<div class="reg blk" style="left:399px;top:440px;width:51.5px;height:12px;text-align:right;">358,502</div>
<div class="reg blk" style="left:452px;top:440px;width:44.5px;height:12px;text-align:right;">358,502</div>
<div class="reg blk" style="left:499px;top:440px;width:44.5px;height:12px;text-align:right;">358,502</div>
<div class="reg blk" style="left:546.5px;top:440px;width:51.5px;height:12px;text-align:right;">358,502</div>
<div class="reg blk" style="left:599.5px;top:440px;width:43.5px;height:12px;text-align:right;">358,502</div>
<div class="reg blk" style="left:645.5px;top:440px;width:44.5px;height:12px;text-align:right;">358,502</div>
<div class="reg blk" style="left:692.5px;top:440px;width:51.0px;height:12px;text-align:right;">358,502</div>
<div class="reg blk" style="left:747px;top:440px;width:50px;height:12px;text-align:right;">358,502</div>
<div class="reg blk" style="left:799px;top:440px;width:45px;height:12px;text-align:right;">349,260</div>
<div class="reg blk" style="left:846px;top:440px;width:44.5px;height:12px;text-align:right;">397,857</div>
<div class="reg blk" style="left:893px;top:440px;width:41.5px;height:12px;text-align:right;">398,744</div>
<div class="reg blk" style="left:938px;top:440px;width:43px;height:12px;text-align:right;">4,302,020</div>
<div class="reg itm" style="left:61.6px;top:479px;width:149.4px;height:12px;letter-spacing:-0.1px;">Transaction Fees</div>
<div class="reg num neg" style="left:211px;top:479px;width:45.30000000000001px;height:12px;text-align:right;">(975)</div>
<div class="reg num neg" style="left:259px;top:479px;width:44.80000000000001px;height:12px;text-align:right;">(975)</div>
<div class="reg num neg" style="left:307px;top:479px;width:43.80000000000001px;height:12px;text-align:right;">(975)</div>
<div class="reg num neg" style="left:354px;top:479px;width:42.80000000000001px;height:12px;text-align:right;">(975)</div>
<div class="reg num neg" style="left:399px;top:479px;width:51.80000000000001px;height:12px;text-align:right;">(975)</div>
<div class="reg num neg" style="left:452px;top:479px;width:44.80000000000001px;height:12px;text-align:right;">(975)</div>
<div class="reg num neg" style="left:499px;top:479px;width:44.799999999999955px;height:12px;text-align:right;">(975)</div>
<div class="reg num neg" style="left:546.5px;top:479px;width:51.799999999999955px;height:12px;text-align:right;">(975)</div>
<div class="reg num neg" style="left:599.5px;top:479px;width:43.799999999999955px;height:12px;text-align:right;">(975)</div>
<div class="reg num neg" style="left:645.5px;top:479px;width:44.799999999999955px;height:12px;text-align:right;">(975)</div>
<div class="reg num neg" style="left:692.5px;top:479px;width:51.299999999999955px;height:12px;text-align:right;">(975)</div>
<div class="reg num neg" style="left:747px;top:479px;width:50.299999999999955px;height:12px;text-align:right;">(975)</div>
<div class="reg num neg" style="left:799px;top:479px;width:45.299999999999955px;height:12px;text-align:right;">(975)</div>
<div class="reg num neg" style="left:846px;top:479px;width:44.799999999999955px;height:12px;text-align:right;">(975)</div>
<div class="reg num neg" style="left:893px;top:479px;width:41.799999999999955px;height:12px;text-align:right;">(975)</div>
<div class="reg num neg" style="left:938px;top:479px;width:43.299999999999955px;height:12px;text-align:right;">(11,700)</div>
<div class="reg itm" style="left:61.6px;top:492px;width:149.4px;height:12px;letter-spacing:-0.22px;">3rd Party HR</div>
<div class="reg num neg" style="left:211px;top:492px;width:45.30000000000001px;height:12px;text-align:right;">(300)</div>
<div class="reg num neg" style="left:259px;top:492px;width:44.80000000000001px;height:12px;text-align:right;">(300)</div>
<div class="reg num neg" style="left:307px;top:492px;width:43.80000000000001px;height:12px;text-align:right;">(300)</div>
<div class="reg num neg" style="left:354px;top:492px;width:42.80000000000001px;height:12px;text-align:right;">(300)</div>
<div class="reg num neg" style="left:399px;top:492px;width:51.80000000000001px;height:12px;text-align:right;">(300)</div>
<div class="reg num neg" style="left:452px;top:492px;width:44.80000000000001px;height:12px;text-align:right;">(300)</div>
<div class="reg num neg" style="left:499px;top:492px;width:44.799999999999955px;height:12px;text-align:right;">(300)</div>
<div class="reg num neg" style="left:546.5px;top:492px;width:51.799999999999955px;height:12px;text-align:right;">(300)</div>
<div class="reg num neg" style="left:599.5px;top:492px;width:43.799999999999955px;height:12px;text-align:right;">(300)</div>
<div class="reg num neg" style="left:645.5px;top:492px;width:44.799999999999955px;height:12px;text-align:right;">(300)</div>
<div class="reg num neg" style="left:692.5px;top:492px;width:51.299999999999955px;height:12px;text-align:right;">(300)</div>
<div class="reg num neg" style="left:747px;top:492px;width:50.299999999999955px;height:12px;text-align:right;">(300)</div>
<div class="reg num neg" style="left:799px;top:492px;width:45.299999999999955px;height:12px;text-align:right;">(300)</div>
<div class="reg num neg" style="left:846px;top:492px;width:44.799999999999955px;height:12px;text-align:right;">(300)</div>
<div class="reg num neg" style="left:893px;top:492px;width:41.799999999999955px;height:12px;text-align:right;">(300)</div>
<div class="reg num neg" style="left:938px;top:492px;width:43.299999999999955px;height:12px;text-align:right;">(3,600)</div>
<div class="reg itm" style="left:61.6px;top:505px;width:149.4px;height:12px;letter-spacing:0.14px;">Maintenance</div>
<div class="reg num neg" style="left:211px;top:505px;width:45.30000000000001px;height:12px;text-align:right;">(300)</div>
<div class="reg num neg" style="left:259px;top:505px;width:44.80000000000001px;height:12px;text-align:right;">(300)</div>
<div class="reg num neg" style="left:307px;top:505px;width:43.80000000000001px;height:12px;text-align:right;">(300)</div>
<div class="reg num neg" style="left:354px;top:505px;width:42.80000000000001px;height:12px;text-align:right;">(300)</div>
<div class="reg num neg" style="left:399px;top:505px;width:51.80000000000001px;height:12px;text-align:right;">(300)</div>
<div class="reg num neg" style="left:452px;top:505px;width:44.80000000000001px;height:12px;text-align:right;">(300)</div>
<div class="reg num neg" style="left:499px;top:505px;width:44.799999999999955px;height:12px;text-align:right;">(300)</div>
<div class="reg num neg" style="left:546.5px;top:505px;width:51.799999999999955px;height:12px;text-align:right;">(300)</div>
<div class="reg num neg" style="left:599.5px;top:505px;width:43.799999999999955px;height:12px;text-align:right;">(300)</div>
<div class="reg num neg" style="left:645.5px;top:505px;width:44.799999999999955px;height:12px;text-align:right;">(300)</div>
<div class="reg num neg" style="left:692.5px;top:505px;width:51.299999999999955px;height:12px;text-align:right;">(300)</div>
<div class="reg num neg" style="left:747px;top:505px;width:50.299999999999955px;height:12px;text-align:right;">(300)</div>
<div class="reg num neg" style="left:799px;top:505px;width:45.299999999999955px;height:12px;text-align:right;">(300)</div>
<div class="reg num neg" style="left:846px;top:505px;width:44.799999999999955px;height:12px;text-align:right;">(300)</div>
<div class="reg num neg" style="left:893px;top:505px;width:41.799999999999955px;height:12px;text-align:right;">(300)</div>
<div class="reg num neg" style="left:938px;top:505px;width:43.299999999999955px;height:12px;text-align:right;">(3,600)</div>
<div class="reg itm" style="left:61.6px;top:518px;width:149.4px;height:12px;">Content Licencing</div>
<div class="reg num neg" style="left:211px;top:518px;width:45.30000000000001px;height:12px;text-align:right;">(710)</div>
<div class="reg num neg" style="left:259px;top:518px;width:44.80000000000001px;height:12px;text-align:right;">(710)</div>
<div class="reg num neg" style="left:307px;top:518px;width:43.80000000000001px;height:12px;text-align:right;">(710)</div>
<div class="reg num neg" style="left:354px;top:518px;width:42.80000000000001px;height:12px;text-align:right;">(710)</div>
<div class="reg num neg" style="left:399px;top:518px;width:51.80000000000001px;height:12px;text-align:right;">(710)</div>
<div class="reg num neg" style="left:452px;top:518px;width:44.80000000000001px;height:12px;text-align:right;">(710)</div>
<div class="reg num neg" style="left:499px;top:518px;width:44.799999999999955px;height:12px;text-align:right;">(710)</div>
<div class="reg num neg" style="left:546.5px;top:518px;width:51.799999999999955px;height:12px;text-align:right;">(710)</div>
<div class="reg num neg" style="left:599.5px;top:518px;width:43.799999999999955px;height:12px;text-align:right;">(710)</div>
<div class="reg num neg" style="left:645.5px;top:518px;width:44.799999999999955px;height:12px;text-align:right;">(710)</div>
<div class="reg num neg" style="left:692.5px;top:518px;width:51.299999999999955px;height:12px;text-align:right;">(710)</div>
<div class="reg num neg" style="left:747px;top:518px;width:50.299999999999955px;height:12px;text-align:right;">(710)</div>
<div class="reg num neg" style="left:799px;top:518px;width:45.299999999999955px;height:12px;text-align:right;">(710)</div>
<div class="reg num neg" style="left:846px;top:518px;width:44.799999999999955px;height:12px;text-align:right;">(710)</div>
<div class="reg num neg" style="left:893px;top:518px;width:41.799999999999955px;height:12px;text-align:right;">(710)</div>
<div class="reg num neg" style="left:938px;top:518px;width:43.299999999999955px;height:12px;text-align:right;">(8,520)</div>
<div class="reg itm" style="left:61.6px;top:531px;width:149.4px;height:12px;">Placeholder 5</div>
<div class="reg num dash" style="left:211px;top:531px;width:43px;height:12px;text-align:right;">-</div>
<div class="reg num dash" style="left:259px;top:531px;width:42.5px;height:12px;text-align:right;">-</div>
<div class="reg num dash" style="left:307px;top:531px;width:41.5px;height:12px;text-align:right;">-</div>
<div class="reg num dash" style="left:354px;top:531px;width:40.5px;height:12px;text-align:right;">-</div>
<div class="reg num dash" style="left:399px;top:531px;width:49.5px;height:12px;text-align:right;">-</div>
<div class="reg num dash" style="left:452px;top:531px;width:42.5px;height:12px;text-align:right;">-</div>
<div class="reg num dash" style="left:499px;top:531px;width:42.5px;height:12px;text-align:right;">-</div>
<div class="reg num dash" style="left:546.5px;top:531px;width:49.5px;height:12px;text-align:right;">-</div>
<div class="reg num dash" style="left:599.5px;top:531px;width:41.5px;height:12px;text-align:right;">-</div>
<div class="reg num dash" style="left:645.5px;top:531px;width:42.5px;height:12px;text-align:right;">-</div>
<div class="reg num dash" style="left:692.5px;top:531px;width:49.0px;height:12px;text-align:right;">-</div>
<div class="reg num dash" style="left:747px;top:531px;width:48px;height:12px;text-align:right;">-</div>
<div class="reg num dash" style="left:799px;top:531px;width:43px;height:12px;text-align:right;">-</div>
<div class="reg num dash" style="left:846px;top:531px;width:42.5px;height:12px;text-align:right;">-</div>
<div class="reg num dash" style="left:893px;top:531px;width:39.5px;height:12px;text-align:right;">-</div>
<div class="reg num dash" style="left:938px;top:531px;width:41px;height:12px;text-align:right;">-</div>
<div class="reg itm" style="left:61.6px;top:544px;width:149.4px;height:12px;">Placeholder 6</div>
<div class="reg num dash" style="left:211px;top:544px;width:43px;height:12px;text-align:right;">-</div>
<div class="reg num dash" style="left:259px;top:544px;width:42.5px;height:12px;text-align:right;">-</div>
<div class="reg num dash" style="left:307px;top:544px;width:41.5px;height:12px;text-align:right;">-</div>
<div class="reg num dash" style="left:354px;top:544px;width:40.5px;height:12px;text-align:right;">-</div>
<div class="reg num dash" style="left:399px;top:544px;width:49.5px;height:12px;text-align:right;">-</div>
<div class="reg num dash" style="left:452px;top:544px;width:42.5px;height:12px;text-align:right;">-</div>
<div class="reg num dash" style="left:499px;top:544px;width:42.5px;height:12px;text-align:right;">-</div>
<div class="reg num dash" style="left:546.5px;top:544px;width:49.5px;height:12px;text-align:right;">-</div>
<div class="reg num dash" style="left:599.5px;top:544px;width:41.5px;height:12px;text-align:right;">-</div>
<div class="reg num dash" style="left:645.5px;top:544px;width:42.5px;height:12px;text-align:right;">-</div>
<div class="reg num dash" style="left:692.5px;top:544px;width:49.0px;height:12px;text-align:right;">-</div>
<div class="reg num dash" style="left:747px;top:544px;width:48px;height:12px;text-align:right;">-</div>
<div class="reg num dash" style="left:799px;top:544px;width:43px;height:12px;text-align:right;">-</div>
<div class="reg num dash" style="left:846px;top:544px;width:42.5px;height:12px;text-align:right;">-</div>
<div class="reg num dash" style="left:893px;top:544px;width:39.5px;height:12px;text-align:right;">-</div>
<div class="reg num dash" style="left:938px;top:544px;width:41px;height:12px;text-align:right;">-</div>
<div class="tri" style="left:938px;top:478px;"></div>
<div class="tri" style="left:938px;top:490px;"></div>
<div class="tri" style="left:938px;top:504px;"></div>
<div class="tri" style="left:938px;top:516px;"></div>
<div class="tri" style="left:938px;top:530px;"></div>
<div class="tri" style="left:938px;top:542px;"></div>
<div class="tri" style="left:938px;top:556px;"></div>
<div id="vscroll">
  <svg style="position:absolute;left:7.5px;top:3.5px" width="7" height="5" viewBox="0 0 7 5"><path d="M0.5 4.5 L3.5 0.5 L6.5 4.5Z" fill="#606060"/></svg>
  <div style="left:8px;top:12.7px;width:5.5px;height:100px;background:#747474;border-radius:3px;"></div>
  <svg style="position:absolute;left:7.5px;top:502px" width="7" height="5" viewBox="0 0 7 5"><path d="M0.5 0.5 L3.5 4.5 L6.5 0.5Z" fill="#606060"/></svg>
</div>
<div id="tabbar">
  <div class="tab" style="left:17px;color:#aaa;">&#8249;</div>
  <div class="tab" style="left:37px;color:#555;">&#8250;</div>
  <div class="tab" style="left:79px">How To</div>
  <div class="tab" style="left:128px">Inputs 2025</div>
  <div style="left:186px;top:0;width:40px;height:18px;background:#f5f7e9;"></div>
  <div class="tab" style="left:192px;top:-1.5px;font-weight:bold;font-size:8.7px;color:#1c2a22;">IS 2025</div>
  <div style="left:192px;top:15.5px;width:30px;height:1.3px;background:#3b8f55;"></div>
  <div class="tab" style="left:238px">CF 2025</div>
  <div class="tab" style="left:287px">BS 2025</div>
  <div class="tab" style="left:338px">Statements Summary 2025</div>
  <div class="tab ytab" style="left:458.5px;width:61.5px;padding-left:6px;letter-spacing:-0.35px;">CAPEX 2025</div>
  <div class="tab ytab" style="left:526px;width:59px;padding-left:5px;">Inputs 2026</div>
  <div class="tab ytab" style="left:590px;width:41px;padding-left:6px;">IS 2026</div>
  <div class="tab" style="left:641px">CF 2026</div>
  <div class="tab" style="left:691px">BS 2026</div>
  <div class="tab" style="left:742px">Statements Summary 2026</div>
  <div class="tab ytab" style="left:862.5px;width:17.5px;padding-left:5.5px;overflow:hidden;letter-spacing:-0.3px;">CA</div>
  <div class="tab" style="left:888px;font-size:6.5px;">&#8226;&#8226;&#8226;</div>
  <div class="tab" style="left:906px;font-size:12px;">+</div>
  <div class="tab" style="left:929px;font-size:9px;">&#8942;</div>
  <svg style="position:absolute;left:946px;top:6px" width="5" height="7" viewBox="0 0 5 7"><path d="M4.5 0.5 L0.5 3.5 L4.5 6.5Z" fill="#555"/></svg>
  <div style="left:953px;top:6.5px;width:12px;height:6px;background:#666;border-radius:3px;"></div>
  <svg style="position:absolute;left:981px;top:6px" width="5" height="7" viewBox="0 0 5 7"><path d="M0.5 0.5 L4.5 3.5 L0.5 6.5Z" fill="#555"/></svg>
</div>
<div id="status">
  <div class="st" style="left:8px;font-size:6.3px;">Ready</div>
  <svg style="position:absolute;left:40px;top:5px" width="9" height="9" viewBox="0 0 9 9">
    <rect x="0.5" y="0.5" width="8" height="8" fill="none" stroke="#555" stroke-width="1"/>
    <path d="M2 2h1v1H2zM4 2h1v1H4zM6 2h1v1H6zM3 3h1v1H3zM5 3h1v1H5zM2 4h1v1H2zM4 4h1v1H4zM6 4h1v1H6zM3 5h1v1H3zM5 5h1v1H5zM2 6h1v1H2zM4 6h1v1H4zM6 6h1v1H6z" fill="#555"/>
  </svg>
  <svg style="position:absolute;left:61px;top:4px" width="9" height="10" viewBox="0 0 9 10">
    <circle cx="4.5" cy="1.6" r="1.2" fill="none" stroke="#444" stroke-width="0.9"/>
    <path d="M0.5 3.5 L8.5 3.5 M4.5 3.5 L4.5 6 M4.5 6 L2 9.5 M4.5 6 L7 9.5" fill="none" stroke="#444" stroke-width="1"/>
  </svg>
  <div class="st" style="left:72px;font-weight:bold;color:#222;font-size:6.6px;">Accessibility: Investigate</div>
  <svg style="position:absolute;left:815px;top:5px" width="10" height="10" viewBox="0 0 10 10">
    <rect x="0.5" y="0.5" width="9" height="9" fill="none" stroke="#444" stroke-width="1"/>
    <path d="M0.5 3.5 H9.5 M0.5 6.5 H9.5 M3.5 0.5 V9.5 M6.5 0.5 V9.5" stroke="#444" stroke-width="0.8"/>
  </svg>
  <svg style="position:absolute;left:842.5px;top:5px" width="10" height="10" viewBox="0 0 10 10">
    <rect x="0.5" y="0.5" width="9" height="9" fill="none" stroke="#444" stroke-width="1"/>
    <rect x="2.5" y="0.5" width="5" height="9" fill="#777"/>
  </svg>
  <svg style="position:absolute;left:867px;top:5px" width="10" height="10" viewBox="0 0 10 10">
    <path d="M0.5 9.5 V0.5 H9.5 V9.5 Z M0.5 5 H5 V0.5" fill="none" stroke="#444" stroke-width="1"/>
  </svg>
  <div style="left:889.5px;top:9px;width:5px;height:1px;background:#555;"></div>
  <div style="left:896px;top:9px;width:66px;height:1px;background:#9a9a9a;"></div>
  <div style="left:928.5px;top:5px;width:3px;height:9px;background:#555;"></div>
  <div style="left:965px;top:9px;width:7px;height:1px;background:#555;"></div>
  <div style="left:968px;top:6px;width:1px;height:7px;background:#555;"></div>
  <div class="st" style="left:979px;font-size:7px;">100%</div>
</div>
</body></html>
